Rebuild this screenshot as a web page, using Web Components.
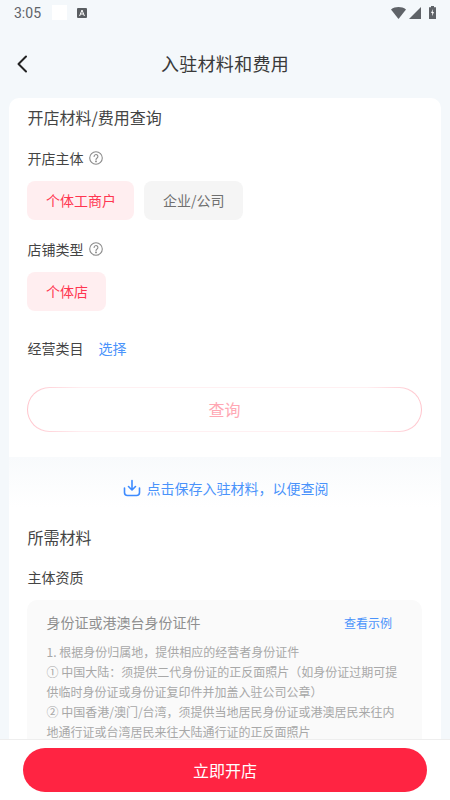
<!DOCTYPE html>
<html lang="zh">
<head>
<meta charset="utf-8">
<title>入驻材料和费用</title>
<style>
  html, body { margin: 0; padding: 0; width: 450px; height: 800px; overflow: hidden; background: #f4f8fb; }
  body { font-family: "Noto Sans CJK SC", "Noto Sans", sans-serif; color: #444; }
</style>
</head>
<body>
<settle-page>
  <status-bar slot="top"></status-bar>
  <nav-bar slot="top">入驻材料和费用</nav-bar>

  <query-card>
    <field-group label="开店主体" hint>
      <option-chip selected>个体工商户</option-chip>
      <option-chip>企业/公司</option-chip>
    </field-group>
    <field-group label="店铺类型" hint>
      <option-chip selected>个体店</option-chip>
    </field-group>
  </query-card>

  <materials-panel>
    <material-box heading="身份证或港澳台身份证件">
      1. 根据身份归属地，提供相应的经营者身份证件<br>
      ① 中国大陆：须提供二代身份证的正反面照片（如身份证过期可提供临时身份证或身份证复印件并加盖入驻公司公章）<br>
      ② 中国香港/澳门/台湾，须提供当地居民身份证或港澳居民来往内地通行证或台湾居民来往大陆通行证的正反面照片
    </material-box>
  </materials-panel>

  <open-footer slot="bottom">立即开店</open-footer>
</settle-page>

<script>
class SettlePage extends HTMLElement {
    constructor() {
        super();
        this.attachShadow({ mode: "open" });
        this.shadowRoot.innerHTML = `
            <style>
                :host { display: flex; flex-direction: column; width: 450px; height: 800px; overflow: hidden; }
                #scroll { flex: 1; min-height: 0; overflow: hidden; padding: 0 9px; }
            </style>
            <slot name="top"></slot>
            <div id="scroll"><slot></slot></div>
            <slot name="bottom"></slot>
        `;
    }
}

class StatusBar extends HTMLElement {
    constructor() {
        super();
        this.attachShadow({ mode: "open" });
        this.shadowRoot.innerHTML = `
            <style>
                :host { display: flex; align-items: center; height: 25px; padding: 0 14px; box-sizing: border-box; color: #5f6368; font: 14px Roboto, sans-serif; }
                #time { width: 38px; }
                #blank { width: 15px; height: 15px; background: #fff; }
                #a { width: 10px; height: 10px; margin-left: 10px; }
                #right { margin-left: auto; display: flex; align-items: center; gap: 3px; }
            </style>
            <span id="time">3:05</span>
            <span id="blank"></span>
            <svg id="a" viewBox="0 0 10 10"><rect width="10" height="10" rx="1" fill="#5a5e62"/><path d="M2.600 8 5 2l2.400 6M3.500 6h3" fill="none" stroke="#fff" stroke-width="1"/></svg>
            <div id="right">
                <svg width="15" height="12" viewBox="0 0 15 12"><path d="M0 2.400C4.300-.8 10.700-.8 15 2.400L7.500 12z" fill="#5f6368"/></svg>
                <svg width="12" height="12" viewBox="0 0 12 12"><path d="M12 0v12H0z" fill="#5f6368"/></svg>
                <svg width="7" height="13" viewBox="0 0 7 13" style="margin-left:5px"><path d="M2 0h3v1.200h2V13H0V1.200h2z" fill="#5f6368"/><path d="M4 3 2 7h1.300L3 10.200 5 6H3.700z" fill="#fff"/></svg>
            </div>
        `;
    }
}

class NavBar extends HTMLElement {
    constructor() {
        super();
        this.attachShadow({ mode: "open" });
        this.shadowRoot.innerHTML = `
            <style>
                :host { display: flex; align-items: center; justify-content: center; position: relative; height: 73px; padding-top: 2px; font-size: 18px; letter-spacing: .3px; color: #3a3a3a; box-sizing: border-box; }
                svg { position: absolute; left: 16px; top: 30px; }
            </style>
            <svg width="12" height="18" viewBox="0 0 12 18"><path d="M10 1.500 2.500 9l7.500 7.500" fill="none" stroke="#222" stroke-width="2" stroke-linecap="round" stroke-linejoin="round"/></svg>
            <slot></slot>
        `;
    }
}

class HintIcon extends HTMLElement {
    constructor() {
        super();
        this.attachShadow({ mode: "open" });
        this.shadowRoot.innerHTML = `
            <style>:host { display: inline-flex; }</style>
            <svg width="14" height="14" viewBox="0 0 14 14" fill="none" stroke="#8c8c8c" stroke-width="1.100">
                <circle cx="7" cy="7" r="6.300"/>
                <path d="M5.100 5.500a1.900 1.900 0 1 1 3 1.500c-.7.5-1.100.8-1.100 1.700" stroke-linecap="round"/>
                <circle cx="7" cy="10.400" r=".4" fill="#8c8c8c"/>
            </svg>
        `;
    }
}

class OptionChip extends HTMLElement {
    constructor() {
        super();
        this.attachShadow({ mode: "open" });
        this.shadowRoot.innerHTML = `
            <style>
                :host { display: inline-flex; align-items: center; height: 39px; padding: 0 18px 1px 19px; box-sizing: border-box; border-radius: 8px; font-size: 14px; background: #f5f5f5; color: #707070; }
                :host([selected]) { background: #ffeef0; color: #ff3651; }
            </style>
            <slot></slot>
        `;
    }
}

class FieldGroup extends HTMLElement {
    constructor() {
        super();
        this.attachShadow({ mode: "open" });
    }

    connectedCallback() {
        this.shadowRoot.innerHTML = `
            <style>
                :host { display: block; padding-top: 20px; }
                #label { display: flex; align-items: center; gap: 5px; height: 18px; padding-left: .5px; font-size: 14px; }
                #chips { display: flex; gap: 10px; margin-top: 14px; }
            </style>
            <div id="label">${this.getAttribute("label")}<hint-icon></hint-icon></div>
            <div id="chips"><slot></slot></div>
        `;
    }
}

class QueryCard extends HTMLElement {
    constructor() {
        super();
        this.attachShadow({ mode: "open" });
        this.shadowRoot.innerHTML = `
            <style>
                :host { display: block; background: #fff; border-radius: 10px 10px 0 0; padding: 0 19px 25px 18px; }
                h2 { margin: 0; padding: 8px 0 0 .5px; height: 23px; line-height: 22px; font-size: 16px; font-weight: 400; }
                #category { display: flex; align-items: center; gap: 15px; height: 18px; margin-top: 28px; padding-left: .5px; font-size: 14px; }
                #category span { color: #4a93fb; }
                button { display: block; width: 100%; height: 45px; margin-top: 30px; padding: 0 0 2px; border: 1px solid transparent; border-radius: 23px; font: inherit; font-size: 16px; color: #ffa8b4;
                    background: linear-gradient(#fff, #fff) padding-box, linear-gradient(90deg, #ffc4cc 0, #fff0f2 14%, #fff0f2 86%, #ffc4cc 100%) border-box; }
            </style>
            <h2>开店材料/费用查询</h2>
            <slot></slot>
            <div id="category">经营类目<span>选择</span></div>
            <button>查询</button>
        `;
    }
}

class MaterialsPanel extends HTMLElement {
    constructor() {
        super();
        this.attachShadow({ mode: "open" });
        this.shadowRoot.innerHTML = `
            <style>
                :host { display: block; padding: 0 19px 0 18px; background: linear-gradient(#f8fafc, #fff 50px) no-repeat #fff; }
                #save { display: flex; align-items: center; justify-content: center; gap: 6px; height: 20px; padding: 21px 0 0 2px; font-size: 14px; color: #4a93fb; }
                h2 { margin: 28px 0 0; padding-left: .5px; height: 23px; line-height: 22px; font-size: 16px; font-weight: 400; }
                h3 { margin: 18px 0 13px; padding-left: .5px; height: 20px; line-height: 20px; font-size: 14px; font-weight: 400; }
            </style>
            <div id="save">
                <svg width="18" height="18" viewBox="0 0 18 18" fill="none" stroke="#3d8bff" stroke-width="1.600" stroke-linecap="round" stroke-linejoin="round">
                    <path d="M9 1.500v9M5.500 7.500 9 11l3.500-3.500"/>
                    <path d="M1.500 9v4.500a3 3 0 0 0 3 3h9a3 3 0 0 0 3-3V9"/>
                </svg>
                点击保存入驻材料，以便查阅
            </div>
            <h2>所需材料</h2>
            <h3>主体资质</h3>
            <slot></slot>
        `;
    }
}

class MaterialBox extends HTMLElement {
    constructor() {
        super();
        this.attachShadow({ mode: "open" });
    }

    connectedCallback() {
        this.shadowRoot.innerHTML = `
            <style>
                :host { display: block; background: #fafafa; border-radius: 10px 10px 0 0; padding: 12px 19px 12px 19.500px; }
                #head { display: flex; align-items: center; justify-content: space-between; height: 20px; font-size: 14px; color: #8f8f8f; padding-right: 11px; }
                #head span { font-size: 12px; color: #4a93fb; }
                #body { margin-top: 10px; font-size: 12px; line-height: 20px; color: #a8a8a8; }
            </style>
            <div id="head">${this.getAttribute("heading")}<span>查看示例</span></div>
            <div id="body"><slot></slot></div>
        `;
    }
}

class OpenFooter extends HTMLElement {
    constructor() {
        super();
        this.attachShadow({ mode: "open" });
        this.shadowRoot.innerHTML = `
            <style>
                :host { display: block; height: 61px; box-sizing: border-box; padding: 8px 23px 0; background: #fff; border-top: 1px solid #eee; }
                button { display: block; width: 100%; height: 44px; border: 0; border-radius: 22px; background: #ff2442; color: #fff; font: inherit; font-size: 16px; }
            </style>
            <button><slot></slot></button>
        `;
    }
}

customElements.define("settle-page", SettlePage);
customElements.define("status-bar", StatusBar);
customElements.define("nav-bar", NavBar);
customElements.define("hint-icon", HintIcon);
customElements.define("option-chip", OptionChip);
customElements.define("field-group", FieldGroup);
customElements.define("query-card", QueryCard);
customElements.define("materials-panel", MaterialsPanel);
customElements.define("material-box", MaterialBox);
customElements.define("open-footer", OpenFooter);
</script>
</body>
</html>
